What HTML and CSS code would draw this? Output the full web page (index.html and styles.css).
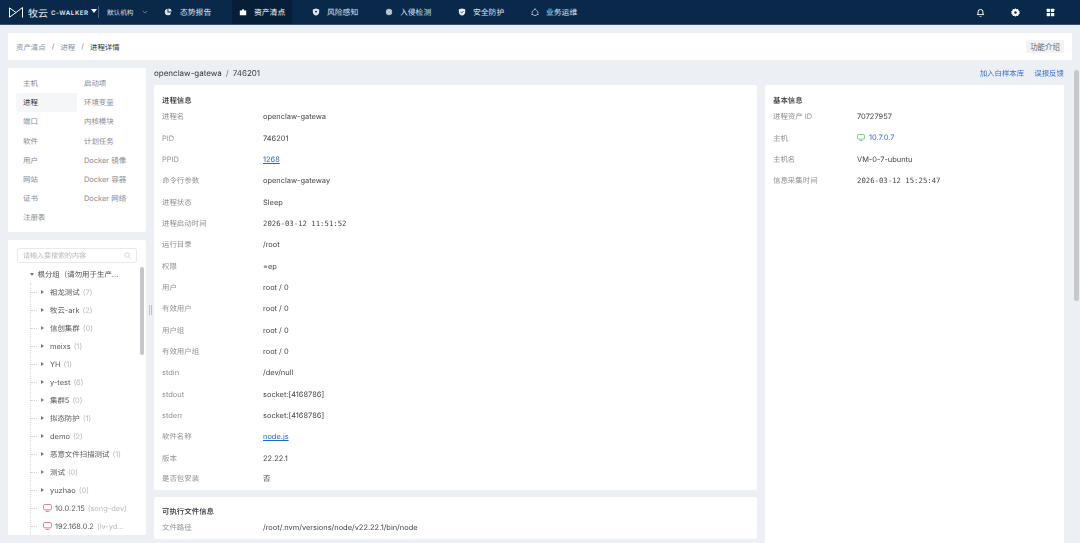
FILE: index.html
```html
<!DOCTYPE html>
<html lang="zh">
<head>
<meta charset="utf-8">
<title>进程详情</title>
<link rel="stylesheet" href="styles.css">
</head>
<body>
<header class="topbar">
  <div class="brand">
    <svg class="logo" viewBox="0 0 14 11" width="14" height="11"><path d="M13.500 10.500V.5L7 5.500.5.9v9.300L7 5.500" fill="none" stroke="#fff" stroke-width="1"/></svg>
    <span class="brand-cn">牧云</span><span class="brand-en">C-WALKER</span>
    <svg class="caret" viewBox="0 0 6 4" width="6" height="4"><path d="M0 0h6L3 4z" fill="#fff"/></svg>
  </div>
  <div class="org"><span>默认机构</span><svg viewBox="0 0 8 5" width="6" height="4"><path d="M1 1l3 3 3-3" fill="none" stroke="#8d9db0" stroke-width="1"/></svg></div>
  <nav class="nav">
    <a class="nav-item first"><svg viewBox="0 0 10 10" width="8" height="8"><path d="M4.400 1a4 4 0 1 0 4.600 4.600H4.400z" fill="#dfe4ea"/><path d="M5.500.5v4h4a4 4 0 0 0-4-4z" fill="#dfe4ea"/></svg>态势报告</a>
    <a class="nav-item active"><svg viewBox="0 0 10 10" width="8" height="8"><path d="M1 3h2.500l.6-1.300h1.800L6.500 3H9v6H1z" fill="#fff"/></svg>资产清点</a>
    <a class="nav-item"><svg viewBox="0 0 10 10" width="8" height="8"><path d="M5 .5l4 1.500v3c0 2.500-2 4-4 4.500-2-.5-4-2-4-4.500V2z" fill="#dfe4ea"/><circle cx="5" cy="4.500" r="1.200" fill="#09284a"/></svg>风险感知</a>
    <a class="nav-item"><svg viewBox="0 0 10 10" width="8" height="8"><circle cx="5" cy="5" r="4" fill="#aab5c2"/><circle cx="5" cy="5" r="2" fill="none" stroke="#dfe4ea" stroke-width=".8"/></svg>入侵检测</a>
    <a class="nav-item"><svg viewBox="0 0 10 10" width="8" height="8"><path d="M5 .5l4 1.200v3.300c0 2.500-2 4-4 4.500-2-.5-4-2-4-4.500V1.700z" fill="#e8ebef"/><path d="M3.200 5l1.400 1.300 2.300-2.500" fill="none" stroke="#09284a" stroke-width=".9"/></svg>安全防护</a>
    <a class="nav-item"><svg viewBox="0 0 10 10" width="8" height="8"><path d="M3.500 2.500A4 4 0 0 0 1.300 6.500M6.500 2.500a4 4 0 0 1 2.200 4M2.500 8.500a4 4 0 0 0 5 0" fill="none" stroke="#dfe4ea" stroke-width=".9"/><circle cx="5" cy="1.700" r="1" fill="#dfe4ea"/><circle cx="1.500" cy="7.800" r="1" fill="#dfe4ea"/><circle cx="8.500" cy="7.800" r="1" fill="#dfe4ea"/></svg>业务运维</a>
  </nav>
  <div class="tools">
    <svg viewBox="0 0 10 10" width="9" height="9"><path d="M2.300 7V4.300a2.700 2.700 0 0 1 5.400 0V7" fill="none" stroke="#fff" stroke-width="1.100"/><path d="M1 7.300h8" stroke="#fff" stroke-width="1"/><path d="M3.800 9a1.400 1.400 0 0 0 2.400 0" fill="none" stroke="#fff" stroke-width=".9"/></svg>
    <svg viewBox="0 0 10 10" width="9" height="9"><path fill-rule="evenodd" d="M5 .3l1 1 1.800-.3.6 1.700L9.800 4l-.6 1 .6 1-1.400 1.300-.6 1.700L6 8.700l-1 1-1-1-1.800.3-.6-1.700L.2 6l.6-1-.6-1 1.400-1.300L2.200 1 4 1.300zM5 3.600a1.400 1.400 0 1 0 0 2.800 1.400 1.400 0 0 0 0-2.800z" fill="#fff"/></svg>
    <svg viewBox="0 0 10 10" width="9" height="9"><rect x=".8" y=".8" width="3.700" height="3.700" rx=".5" fill="#fff"/><rect x="5.500" y=".8" width="3.700" height="3.700" rx=".5" fill="#fff"/><rect x=".8" y="5.500" width="3.700" height="3.700" rx=".5" fill="#fff"/><rect x="5.500" y="5.500" width="3.700" height="3.700" rx=".5" fill="#fff"/></svg>
  </div>
</header>

<div class="crumbs">
  <div class="crumb-path"><span>资产清点</span><i>/</i><span>进程</span><i>/</i><b>进程详情</b></div>
  <button class="intro">功能介绍</button>
</div>

<div class="page">
  <aside class="side">
    <div class="panel menu">
      <a>主机</a><a>启动项</a>
      <a class="on">进程</a><a>环境变量</a>
      <a>端口</a><a>内核模块</a>
      <a>软件</a><a>计划任务</a>
      <a>用户</a><a>Docker 镜像</a>
      <a>网站</a><a>Docker 容器</a>
      <a>证书</a><a>Docker 网络</a>
      <a>注册表</a>
    </div>
    <div class="panel tree-panel">
      <div class="search"><span>请输入要搜索的内容</span><svg viewBox="0 0 10 10" width="7" height="7"><circle cx="4.300" cy="4.300" r="3.300" fill="none" stroke="#c0c4cc" stroke-width=".9"/><path d="M6.800 6.800L9.300 9.300" stroke="#c0c4cc" stroke-width=".9"/></svg></div>
      <div class="tree">
        <div class="root"><i class="tri down"></i>根分组（请勿用于生产...</div>
        <div class="kids">
          <div class="node"><i class="tri"></i>祖龙测试<em>(7)</em></div>
          <div class="node"><i class="tri"></i>牧云-ark<em>(2)</em></div>
          <div class="node"><i class="tri"></i>信创集群<em>(0)</em></div>
          <div class="node"><i class="tri"></i>meixs<em>(1)</em></div>
          <div class="node"><i class="tri"></i>YH<em>(1)</em></div>
          <div class="node"><i class="tri"></i>y-test<em>(6)</em></div>
          <div class="node"><i class="tri"></i>集群5<em>(0)</em></div>
          <div class="node"><i class="tri"></i>拟态防护<em>(1)</em></div>
          <div class="node"><i class="tri"></i>demo<em>(2)</em></div>
          <div class="node"><i class="tri"></i>恶意文件扫描测试<em>(1)</em></div>
          <div class="node"><i class="tri"></i>测试<em>(0)</em></div>
          <div class="node"><i class="tri"></i>yuzhao<em>(0)</em></div>
          <div class="node host"><svg viewBox="0 0 10 9" width="9" height="8"><rect x=".6" y=".6" width="8.800" height="6" rx="1.200" fill="none" stroke="#d9706f" stroke-width="1"/><path d="M3 8.400h4" stroke="#d9706f" stroke-width=".9"/></svg>10.0.2.15<em>(song-dev)</em></div>
          <div class="node host"><svg viewBox="0 0 10 9" width="9" height="8"><rect x=".6" y=".6" width="8.800" height="6" rx="1.200" fill="none" stroke="#d9706f" stroke-width="1"/><path d="M3 8.400h4" stroke="#d9706f" stroke-width=".9"/></svg>192.168.0.2<em>(lv-yd...</em></div>
        </div>
      </div>
      <div class="tree-thumb"></div>
    </div>
    <div class="splitter"></div>
  </aside>

  <main class="content">
    <div class="title-row">
      <h1>openclaw-gatewa<i>/</i>746201</h1>
      <div class="actions"><a>加入白样本库</a><a>误报反馈</a></div>
    </div>
    <div class="columns">
      <div class="col-main">
        <section class="card">
          <h2>进程信息</h2>
          <dl class="rows">
            <div><dt>进程名</dt><dd>openclaw-gatewa</dd></div>
            <div><dt>PID</dt><dd>746201</dd></div>
            <div><dt>PPID</dt><dd><a class="link">1268</a></dd></div>
            <div><dt>命令行参数</dt><dd>openclaw-gateway</dd></div>
            <div><dt>进程状态</dt><dd>Sleep</dd></div>
            <div><dt>进程启动时间</dt><dd class="mono">2026-03-12 11:51:52</dd></div>
            <div><dt>运行目录</dt><dd>/root</dd></div>
            <div><dt>权限</dt><dd>=ep</dd></div>
            <div><dt>用户</dt><dd>root / 0</dd></div>
            <div><dt>有效用户</dt><dd>root / 0</dd></div>
            <div><dt>用户组</dt><dd>root / 0</dd></div>
            <div><dt>有效用户组</dt><dd>root / 0</dd></div>
            <div><dt>stdin</dt><dd>/dev/null</dd></div>
            <div><dt>stdout</dt><dd>socket:[4168786]</dd></div>
            <div><dt>stderr</dt><dd>socket:[4168786]</dd></div>
            <div><dt>软件名称</dt><dd><a class="link">node.js</a></dd></div>
            <div><dt>版本</dt><dd>22.22.1</dd></div>
            <div><dt>是否包安装</dt><dd>否</dd></div>
          </dl>
        </section>
        <section class="card">
          <h2>可执行文件信息</h2>
          <dl class="rows">
            <div><dt>文件路径</dt><dd>/root/.nvm/versions/node/v22.22.1/bin/node</dd></div>
          </dl>
        </section>
      </div>
      <section class="card col-info">
        <h2>基本信息</h2>
        <dl class="rows narrow">
          <div><dt>进程资产 ID</dt><dd>70727957</dd></div>
          <div><dt>主机</dt><dd><span class="host-link"><svg viewBox="0 0 10 9" width="8" height="7"><rect x=".6" y=".6" width="8.800" height="6" rx="1.200" fill="none" stroke="#5bb572" stroke-width="1"/><path d="M3 8.400h4" stroke="#5bb572" stroke-width=".9"/></svg>10.7.0.7</span></dd></div>
          <div><dt>主机名</dt><dd>VM-0-7-ubuntu</dd></div>
          <div><dt>信息采集时间</dt><dd class="mono">2026-03-12 15:25:47</dd></div>
        </dl>
      </section>
    </div>
  </main>
  <div class="page-thumb"></div>
</div>
</body>
</html>
```
FILE: styles.css
```css
* { box-sizing: border-box; }
html, body { height: 100%; }
body {
  margin: 0;
  height: 543px;
  overflow: hidden;
  background: #eceff4;
  color: #3c3f44;
  font-family: Inter, "Noto Sans CJK SC", sans-serif;
  font-size: 7.450px;
  text-rendering: geometricPrecision;
  display: flex;
  flex-direction: column;
  filter: blur(.3px);
}
h1, h2, dl, dd { margin: 0; }
i, em { font-style: normal; }

.topbar {
  flex: none;
  height: 25px;
  background: #09284a;
  border-bottom: 1px solid #36506d;
  display: flex;
  align-items: center;
  color: #dfe4ea;
  white-space: nowrap;
}
.brand { flex: none; display: flex; align-items: center; width: 98px; padding-left: 9px; color: #fff; }
.logo { flex: none; margin-right: 5px; }
.brand-cn { font-size: 10px; color: #e6eaef; }
.brand-en { font-size: 6.200px; font-weight: 600; letter-spacing: .55px; margin-left: 3px; margin-top: 3px; color: #e6eaef; }
.caret { flex: none; margin-left: 2px; margin-top: -2px; }
.org { flex: none; display: flex; align-items: center; gap: 9px; width: 66px; padding-left: 8px; height: 12px; border-left: 1px solid #4a627c; font-size: 6.600px; }
.nav { display: flex; height: 24px; }
.nav-item { flex: none; display: flex; align-items: center; gap: 7px; width: 73px; font-size: 7.800px; }
.nav-item.first { width: 68px; gap: 8px; }
.nav-item.active { background: #061e38; color: #fff; width: 60px; padding-left: 7px; margin-right: 20px; }
.tools { margin-left: auto; display: flex; gap: 26px; padding-right: 25px; }

.crumbs {
  flex: none;
  margin: 8px 8px 0;
  height: 27px;
  background: #fff;
  border-radius: 2px;
  display: flex;
  align-items: center;
  justify-content: space-between;
  padding: 0 8px;
  color: #8c9096;
}
.crumb-path { display: flex; gap: 6px; padding-top: 1px; }
.crumb-path b { font-weight: 400; color: #33363a; }
.intro {
  border: 0;
  background: #f2f3f5;
  border-radius: 2px;
  width: 38px;
  height: 13px;
  padding: 0;
  font: inherit;
  color: #5f6368;
}

.page { flex: 1; min-height: 0; display: flex; padding: 8px 0 0 8px; gap: 8px; position: relative; }
.side { flex: none; width: 138px; height: 467px; display: flex; flex-direction: column; gap: 8px; position: relative; }
.panel { background: #fff; border-radius: 2px; }

.menu {
  display: grid;
  grid-template-columns: 61px 61px;
  grid-auto-rows: 19.170px;
  padding: 6px 8px 4px;
  flex: none;
  height: 164px;
  color: #85898f;
}
.menu a { display: flex; align-items: center; padding-left: 7px; border-radius: 2px; white-space: nowrap; }
.menu a.on { background: #f5f6f8; color: #35383c; }

.tree-panel { flex: 1; position: relative; overflow: hidden; padding: 8px 0 0 9px; }
.search {
  width: 120px;
  height: 15px;
  border: 1px solid #e8eaee;
  border-radius: 2px;
  display: flex;
  align-items: center;
  justify-content: space-between;
  padding: 0 5px;
  color: #b5b8bd;
  font-size: 7px;
}
.tree { margin-top: 2.200px; }
.root { height: 18px; display: flex; align-items: center; padding-left: 12.500px; color: #4a4d52; white-space: nowrap; }
.tri { flex: none; width: 0; height: 0; border-style: solid; border-width: 2.500px 0 2.500px 3px; border-color: transparent transparent transparent #777; margin-right: 6px; }
.tri.down { border-width: 3px 2.500px 0; border-color: #777 transparent transparent; margin-right: 4px; }
.kids { margin-left: 13px; border-left: 1px dotted #d8dadf; }
.node { height: 18px; display: flex; align-items: center; padding-left: 10px; color: #55585d; white-space: nowrap; position: relative; }
.node::before { content: ""; position: absolute; left: 0; top: 9px; width: 6px; border-top: 1px dotted #cfd2d7; }
.node em { color: #b6b9be; margin-left: 3px; }
.node svg { flex: none; margin: 0 3px 0 1px; }
.node.host { padding-left: 11px; }
.tree-thumb { position: absolute; left: 132px; top: 27px; width: 4px; height: 88px; background: #c4c6c9; border-radius: 2px; }
.splitter { position: absolute; left: 141px; top: 237px; width: 3px; height: 10px; border-left: 1px solid #bcc0c6; border-right: 1px solid #bcc0c6; }

.content { flex: none; width: 910px; display: flex; flex-direction: column; }
.title-row { flex: none; height: 17px; display: flex; justify-content: space-between; align-items: flex-start; }
h1 { font-size: 8px; font-weight: 400; line-height: 11px; color: #33363a; }
h1 i { margin: 0 4px; color: #777; }
.actions { display: flex; gap: 10px; color: #2f6fd6; line-height: 11px; }
.columns { display: flex; gap: 8px; align-items: flex-start; }
.col-main { flex: none; width: 603px; display: flex; flex-direction: column; gap: 7px; }
.card { background: #fff; border-radius: 2px; padding: 9.600px 8px 1px; }
.col-info { flex: none; width: 299px; height: 470px; }
h2 { font-size: 7.450px; font-weight: 500; line-height: 11px; color: #2b2e32; margin-bottom: .5px; }
.rows { display: flex; flex-direction: column; }
.rows > div { display: flex; align-items: center; height: 21.330px; }
.rows > div:last-child { height: 20px; }
dt { width: 101px; color: #8e9196; }
.narrow dt { width: 84px; }
dd { color: #41444a; }
.mono { font-family: "DejaVu Sans Mono", monospace; font-size: 7.300px; }
.link { color: #1f66d1; text-decoration: underline; }
.host-link { display: inline-flex; align-items: center; gap: 4px; color: #2f6fd6; }

.page-thumb { position: absolute; left: 1074px; top: 10px; width: 4.500px; height: 231px; background: #c6c8cb; border-radius: 3px; }
```
